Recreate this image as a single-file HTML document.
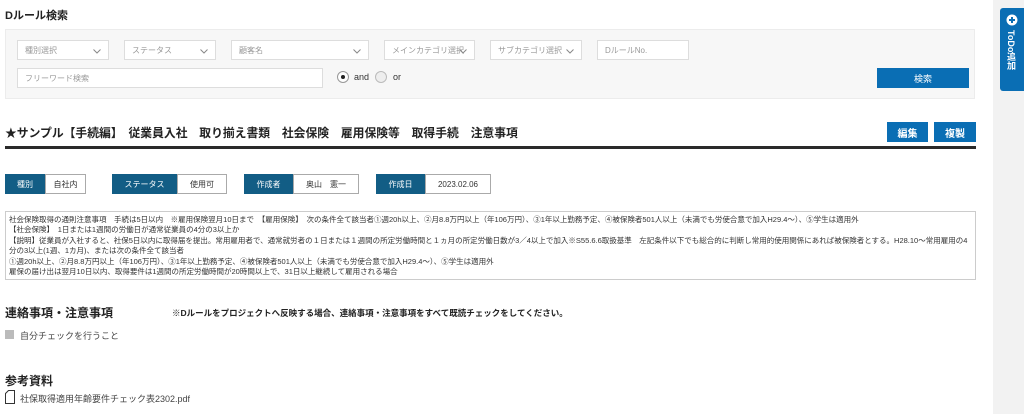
<!DOCTYPE html>
<html><head><meta charset="utf-8"><style>
*{margin:0;padding:0;box-sizing:border-box}
body{width:1024px;height:414px;background:#fff;font-family:"Liberation Sans","Noto Sans CJK JP",sans-serif;color:#333;position:relative;overflow:hidden}
.a{position:absolute}
.side{left:993px;top:0;width:31px;height:414px;background:#f2f2f2}
.tab{left:1000px;top:8px;width:24px;height:83px;background:#0a6eb4;border-radius:3px 0 0 3px}
.panel{left:5px;top:29px;width:970px;height:70px;background:#f7f7f7;border:1px solid #ececec}
.sel{height:20px;background:#fff;border:1px solid #ddd;font-size:8px;color:#999;padding-left:7px;display:flex;align-items:center}
.sel svg{position:absolute;right:7px;top:8px}
.btn{background:#0a6eb4;color:#fff;display:flex;align-items:center;justify-content:center}
.lab{background:#125d85;color:#fff;font-size:8px;display:flex;align-items:center;justify-content:center;height:20px}
.val{border:1px solid #aaa;font-size:8px;display:flex;align-items:center;justify-content:center;height:20px;background:#fff}
.txt{left:5px;top:211px;width:971px;height:69px;border:1px solid #ccc;font-size:7.5px;line-height:10.4px;padding:3px 3px;color:#333;white-space:nowrap;overflow:hidden}
h2{font-size:12px;font-weight:bold;color:#222}
</style></head><body>
<div class="a side"></div>
<div class="a tab"><svg class="a" style="left:6px;top:6px" width="12" height="12" viewBox="0 0 12 12"><circle cx="6" cy="6" r="5.5" fill="#fff"/><path d="M6 3v6M3 6h6" stroke="#0a6eb4" stroke-width="2"/></svg><div class="a" style="left:5px;top:22px;color:#fff;font-size:9px;font-weight:bold;writing-mode:vertical-rl">ToDo追加</div></div>

<h2 class="a" style="left:5px;top:7px;font-size:11px">Dルール検索</h2>
<div class="a panel"></div>
<div class="a sel" style="left:17px;top:40px;width:92px">種別選択<svg width="8" height="5"><path d="M0.5 0.5L4 4L7.5 0.5" fill="none" stroke="#888"/></svg></div>
<div class="a sel" style="left:124px;top:40px;width:92px">ステータス<svg width="8" height="5"><path d="M0.5 0.5L4 4L7.5 0.5" fill="none" stroke="#888"/></svg></div>
<div class="a sel" style="left:231px;top:40px;width:138px">顧客名<svg width="8" height="5"><path d="M0.5 0.5L4 4L7.5 0.5" fill="none" stroke="#888"/></svg></div>
<div class="a sel" style="left:384px;top:40px;width:91px">メインカテゴリ選択<svg width="8" height="5"><path d="M0.5 0.5L4 4L7.5 0.5" fill="none" stroke="#888"/></svg></div>
<div class="a sel" style="left:490px;top:40px;width:92px">サブカテゴリ選択<svg width="8" height="5"><path d="M0.5 0.5L4 4L7.5 0.5" fill="none" stroke="#888"/></svg></div>
<div class="a sel" style="left:597px;top:40px;width:92px">DルールNo.</div>
<div class="a sel" style="left:17px;top:68px;width:306px">フリーワード検索</div>
<svg class="a" style="left:336px;top:70px" width="80" height="14"><circle cx="7" cy="7" r="5.5" fill="#fff" stroke="#999"/><circle cx="7" cy="7" r="2" fill="#222"/><circle cx="45" cy="7" r="5.5" fill="#eee" stroke="#bbb"/></svg>
<div class="a" style="left:354px;top:72px;font-size:9px;color:#333">and</div>
<div class="a" style="left:393px;top:72px;font-size:9px;color:#333">or</div>
<div class="a btn" style="left:877px;top:68px;width:92px;height:20px;font-size:9px">検索</div>

<h2 class="a" style="left:5px;top:124px;font-size:11.8px">★サンプル【手続編】　従業員入社　取り揃え書類　社会保険　雇用保険等　取得手続　注意事項</h2>
<div class="a btn" style="left:887px;top:122px;width:41px;height:20px;font-size:10px;font-weight:bold">編集</div>
<div class="a btn" style="left:934px;top:122px;width:42px;height:20px;font-size:10px;font-weight:bold">複製</div>
<div class="a" style="left:5px;top:146px;width:971px;height:3px;background:#2a2a2a"></div>

<div class="a lab" style="left:5px;top:174px;width:40px">種別</div><div class="a val" style="left:45px;top:174px;width:41px">自社内</div>
<div class="a lab" style="left:112px;top:174px;width:65px">ステータス</div><div class="a val" style="left:177px;top:174px;width:50px">使用可</div>
<div class="a lab" style="left:244px;top:174px;width:49px">作成者</div><div class="a val" style="left:293px;top:174px;width:66px">奥山　憲一</div>
<div class="a lab" style="left:376px;top:174px;width:49px">作成日</div><div class="a val" style="left:425px;top:174px;width:66px">2023.02.06</div>

<div class="a txt">社会保険取得の通則注意事項　手続は5日以内　※雇用保険翌月10日まで　【雇用保険】　次の条件全て該当者①週20h以上、②月8.8万円以上（年106万円）、③1年以上勤務予定、④被保険者501人以上（未満でも労使合意で加入H29.4～）、⑤学生は適用外<br>【社会保険】　1日または1週間の労働日が通常従業員の4分の3以上か<br>【説明】従業員が入社すると、社保5日以内に取得届を提出。常用雇用者で、通常就労者の１日または１週間の所定労働時間と１ヵ月の所定労働日数が3／4以上で加入※S55.6.6取扱基準　左記条件以下でも総合的に判断し常用的使用関係にあれば被保険者とする。H28.10～常用雇用の4<br>分の3以上(1週、1カ月)、または次の条件全て該当者<br>①週20h以上、②月8.8万円以上（年106万円）、③1年以上勤務予定、④被保険者501人以上（未満でも労使合意で加入H29.4～）、⑤学生は適用外<br>雇保の届け出は翌月10日以内、取得要件は1週間の所定労働時間が20時間以上で、31日以上継続して雇用される場合</div>

<h2 class="a" style="left:5px;top:304px">連絡事項・注意事項</h2>
<div class="a" style="left:172px;top:307px;font-size:8.5px;font-weight:bold;color:#222">※Dルールをプロジェクトへ反映する場合、連絡事項・注意事項をすべて既読チェックをしてください。</div>
<div class="a" style="left:5px;top:330px;width:9px;height:9px;background:#bbb"></div>
<div class="a" style="left:20px;top:329px;font-size:9px;color:#444">自分チェックを行うこと</div>
<h2 class="a" style="left:5px;top:372px">参考資料</h2>
<svg class="a" style="left:5px;top:390px" width="10" height="14"><path d="M3.5 0.5H9.5V13.5H0.5V3.5Z" fill="none" stroke="#333"/></svg>
<div class="a" style="left:20px;top:392px;font-size:9px;color:#444">社保取得適用年齢要件チェック表2302.pdf</div>
</body></html>
